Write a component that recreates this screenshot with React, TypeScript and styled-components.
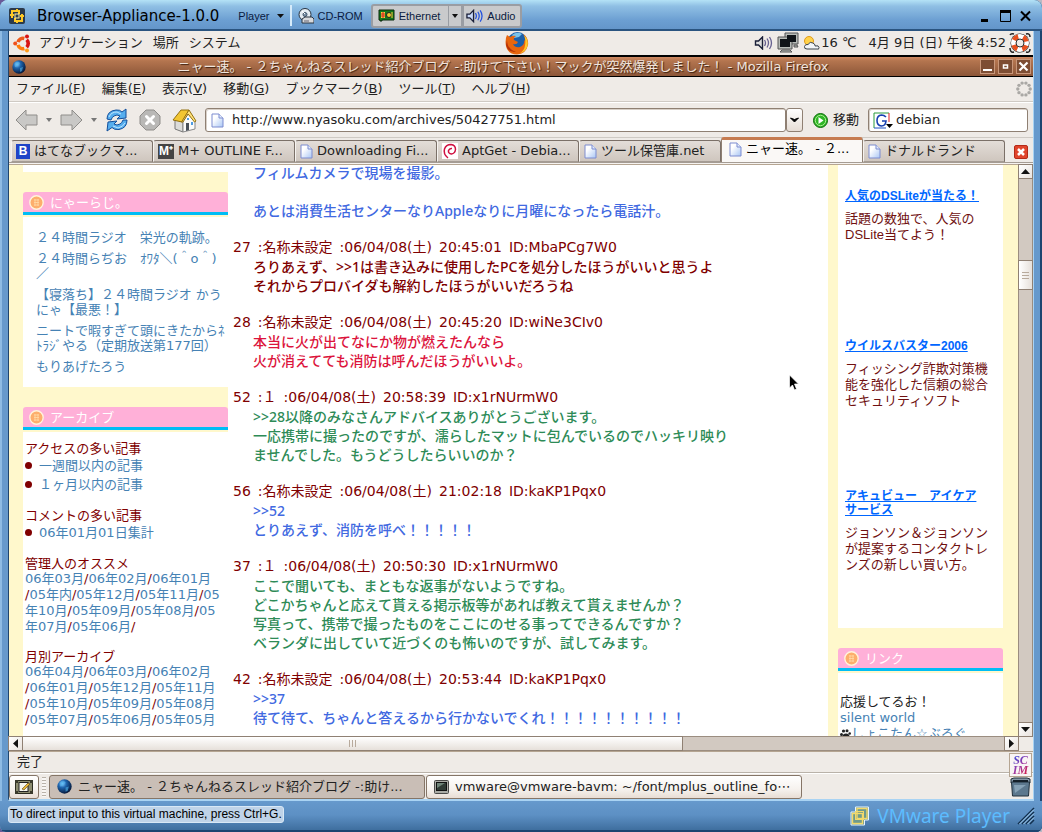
import React from "react";
import styled, { createGlobalStyle, css } from "styled-components";

const UI = `"DejaVu Sans", "Noto Sans CJK JP", sans-serif`;
const WIN = `"Noto Sans", "Noto Sans CJK JP", sans-serif`;
const NARROW = `"Liberation Sans", "Noto Sans CJK JP", sans-serif`;

const Global = createGlobalStyle`
  * { box-sizing: border-box; }
  html, body, #root { height: 100%; }
  body {
    margin: 0;
    overflow: hidden;
    background: linear-gradient(90deg, #6a5a98 0, #6a5a98 50%, #b9b9c4 50%);
    font: 13px/16px ${UI};
    color: #222;
  }
  button, input { font: inherit; color: inherit; }
  button { margin: 0; padding: 0; border: 0; background: none; }
  ul { list-style: none; margin: 0; padding: 0; }
  h2, h3, p { margin: 0; font: inherit; }
  svg { display: block; flex: none; }
  a { color: inherit; text-decoration: none; }
`;

/* ---------- host window ---------- */
const Host = styled.div`
  position: relative;
  height: 100vh;
  min-width: 960px;
  display: flex;
  flex-direction: column;
  background: #6699cc;
  border-radius: 8px 8px 6px 6px;
  overflow: hidden;
  box-shadow: inset 2px 0 0 #8ebbe4, inset -2px 0 0 #1d4570, inset 0 -2px 0 #1d4570;
`;
const HostBar = styled.header`
  flex: none;
  height: 31px;
  display: flex;
  align-items: center;
  padding: 0 11px 0 9px;
  font: 11px/16px ${NARROW};
  color: #0a1a40;
  background: linear-gradient(#b4e2f6 0, #8fbfe4 20%, #6c9fd2 65%, #6496ca 93%, #2a5480 93%);
`;
const HostTitle = styled.h1`
  margin: 0 19px 0 12px;
  font: 15px/20px ${UI};
  color: #000;
`;
const HostMenu = styled.button`
  display: flex;
  align-items: center;
  gap: 7px;
  margin-right: 6px;
`;
const HostRule = styled.span`
  width: 2px;
  height: 21px;
  background: #d6ebfa;
  margin-right: 6px;
`;
const Device = styled.button<{ $raised?: boolean }>`
  display: flex;
  align-items: center;
  gap: 4px;
  height: 24px;
  ${(p) =>
    p.$raised &&
    css`
      padding: 0 6px;
      background: #c9cacc;
      border: 2px solid #9a9da3;
      border-radius: 3px;
    `}
`;
const DeviceGroup = styled.div`
  display: flex;
  margin-left: 8px;
  & > button:nth-child(1) { padding: 0 8px 0 5px; border-radius: 3px 0 0 3px; border-right-width: 1px; }
  & > button:nth-child(2) { padding: 0 3px; border-left: 0; border-right-width: 1px; border-radius: 0; }
  & > button:nth-child(3) { padding: 0 5px 0 2px; border-radius: 0 3px 3px 0; }
`;
const HostControls = styled.div`
  display: flex;
  align-items: center;
  gap: 9px;
  margin-left: auto;
`;
const Guest = styled.div`
  flex: 1;
  min-height: 0;
  margin: 0 8px 0 8px;
  border-left: 1px solid #1f456e;
  border-right: 1px solid #a9d3f3;
  border-bottom: 2px solid #a9d3f3;
  display: flex;
  flex-direction: column;
  background: #efebe7;
`;
const HostFoot = styled.footer`
  flex: none;
  height: 31px;
  display: flex;
  align-items: center;
  padding: 0 7px 1px 8px;
  background: linear-gradient(#6699cc 0, #5d90c4 45%, #3f6f9f 93%, #1d4570 93%);
`;
const Hint = styled.p`
  margin-bottom: 3px;
  height: 17px;
  padding: 0 1px;
  font: 12px/15px ${NARROW};
  color: #000;
  background: #bfd3e8;
  border: 1px solid #d8e8f6;
  border-radius: 3px;
`;
const Brand = styled.div`
  margin-left: auto;
  display: flex;
  align-items: center;
  gap: 7px;
  font: 19px/26px ${WIN};
  color: #5cbcff;
`;

/* ---------- desktop panel ---------- */
const Panel = styled.div`
  flex: none;
  height: 26px;
  display: grid;
  grid-template-columns: 49fr 24px 50fr;
  align-items: center;
  padding: 0 2px 1px 4px;
  border-bottom: 2px solid #000;
`;
const PanelMenus = styled.nav`
  display: flex;
  align-items: center;
  gap: 10px;
  svg { margin-right: -3px; }
`;
const PanelTray = styled.div`
  display: flex;
  align-items: center;
  justify-content: flex-end;
  gap: 4px;
  white-space: nowrap;
`;
const Weather = styled.div`
  display: flex;
  align-items: center;
  gap: 1px;
`;
const Clock = styled.span`
  margin: 0 -1px 0 8px;
`;

/* ---------- browser chrome ---------- */
const TitleBar = styled.div`
  flex: none;
  height: 20px;
  display: flex;
  align-items: center;
  gap: 3px;
  padding: 0 2px 0 3px;
  background: linear-gradient(#d08a63 0, #b4754f 20%, #8c5638 100%);
  border-bottom: 1px solid #000;
  color: #f1e4dc;
  text-shadow: 1px 1px 1px #3c2010;
`;
const TitleText = styled.span`
  flex: 1;
  text-align: center;
  white-space: nowrap;
`;
const WinButton = styled.button`
  width: 15px;
  height: 15px;
  display: grid;
  place-items: center;
  background: #7d4d33;
  border: 1px solid #c9977a;
`;
const MenuBar = styled.nav`
  flex: none;
  height: 25px;
  display: flex;
  align-items: center;
  gap: 16px;
  padding: 0 1px 0 7px;
  border-bottom: 1px solid #cfcac4;
  & > svg { margin-left: auto; }
`;
const ToolBar = styled.div`
  flex: none;
  height: 36px;
  display: flex;
  align-items: center;
  padding: 0 5px 0 6px;
  border-top: 1px solid #fff;
  border-bottom: 1px solid #cfcac4;
`;
const Tool = styled.button<{ $gap: number }>`
  display: flex;
  align-items: center;
  gap: 8px;
  margin-right: ${(p) => p.$gap}px;
`;
const GoTool = styled(Tool)`
  gap: 5px;
`;
const Field = styled.label`
  height: 24px;
  display: flex;
  align-items: center;
  gap: 8px;
  padding: 0 5px;
  background: #fff;
  border: 1px solid #8f8073;
  border-radius: 3px;
  box-shadow: inset 1px 1px 0 #d8d0c8;
  input {
    flex: 1;
    min-width: 0;
    padding: 0;
    border: 0;
    outline: 0;
    background: none;
  }
`;
const UrlField = styled(Field)`
  flex: 1;
  min-width: 0;
`;
const SearchField = styled(Field)`
  width: 160px;
  gap: 2px;
  padding: 0 4px;
`;
const DropButton = styled.button`
  width: 17px;
  height: 24px;
  display: grid;
  place-items: center;
  margin-right: 10px;
  border: 1px solid #8f8073;
  border-radius: 3px;
  background: linear-gradient(#fff, #e6ddd5);
`;
const TabStrip = styled.div`
  flex: none;
  height: 27px;
  display: flex;
  align-items: flex-end;
  padding: 0 5px 2px 2px;
  border-bottom: 1px solid #b5a592;
  background: linear-gradient(#efebe7 0, #efebe7 24px, #a59c94 24px, #a59c94 25px, #f6f3f0 25px);
`;
const Tab = styled.button<{ $active?: boolean }>`
  flex: 1 1 20px;
  min-width: 0;
  height: 22px;
  display: flex;
  align-items: center;
  gap: 4px;
  padding: 0 4px;
  white-space: nowrap;
  overflow: hidden;
  border: 1px solid #7b7068;
  border-bottom-color: #a59c94;
  border-left-color: #f6f3f0;
  border-radius: 3px 3px 0 0;
  background: linear-gradient(#e3ddd8, #cfc6be);
  ${(p) =>
    p.$active &&
    css`
      height: 25px;
      padding: 0 7px 4px;
      color: #000;
      border-color: #8f8073;
      border-top: 3px solid #c67b50;
      border-bottom: 0;
      background: #faf8f6;
    `}
`;
const TabLabel = styled.span``;
const TabClose = styled.button`
  margin: 0 0 3px 9px;
`;

/* ---------- page ---------- */
const Viewport = styled.main`
  flex: 1;
  min-height: 0;
  display: grid;
  grid-template-columns: minmax(0, 1fr) 15px;
  grid-template-rows: minmax(0, 1fr) 15px;
`;
const Page = styled.div`
  overflow: hidden;
  display: flex;
  background: #fff8cc;
  padding: 0 15px 0 14px;
  white-space: nowrap;
`;
const LeftBar = styled.aside`
  flex: none;
  width: 205px;
  display: flex;
  flex-direction: column;
`;
const RightBar = styled(LeftBar)`
  width: 165px;
  margin-left: 10px;
`;
const Sheet = styled.section<{ $pad: string; $grow?: boolean }>`
  background: #fff;
  padding: ${(p) => p.$pad};
  flex: ${(p) => (p.$grow ? "1 0 auto" : "none")};
`;
const BoxTitle = styled.h2`
  flex: none;
  height: 23px;
  margin: 20px 0 2px;
  display: flex;
  align-items: center;
  gap: 6px;
  padding: 2px 6px 0;
  color: #fff;
  background: #ffb0d8;
  border-bottom: 3px solid #00bdf5;
  border-radius: 3px 3px 0 0;
  svg { margin-top: -2px; }
`;
const LinkList = styled.ul`
  display: grid;
  gap: 6px;
  line-height: 15px;
  color: #4682b4;
`;
const Archive = styled.section`
  color: #800000;
  & + & { margin-top: 14px; }
  h3 { line-height: 15px; }
  a { color: #4682b4; }
`;
const Bullets = styled.ul`
  li {
    display: flex;
    align-items: center;
    gap: 7px;
    line-height: 19px;
  }
  li::before {
    content: "";
    width: 7px;
    height: 7px;
    border-radius: 4px;
    background: #800000;
  }
`;
const Thread = styled.div`
  flex: 1;
  min-width: 0;
  overflow: hidden;
  padding-left: 5px;
  background: #fff;
  font-size: 14px;
`;
const Posts = styled.div`
  display: grid;
  gap: 17px;
  margin-top: -2px;
`;
const PostHead = styled.h3`
  line-height: 20px;
  color: #800000;
`;
const PostBody = styled.p<{ $color: string }>`
  padding-left: 20px;
  line-height: 19px;
  font-family: "Noto Sans", "Noto Sans CJK JP", sans-serif;
  font-weight: 500;
  color: ${(p) => p.$color};
`;
const Ads = styled.div`
  display: grid;
  grid-auto-rows: 139px;
  gap: 11px;
  align-content: start;
  font-family: ${NARROW};
  color: #701010;
  a {
    display: block;
    margin-bottom: 8px;
    font-size: 12px;
    line-height: 14px;
    font-weight: bold;
    color: #0066ff;
    text-decoration: underline;
  }
`;
const Blogs = styled.div`
  color: #222;
  a {
    display: flex;
    align-items: center;
    color: #4682b4;
  }
`;

/* ---------- scroll bars ---------- */
const Track = styled.div<{ $across?: boolean }>`
  display: flex;
  flex-direction: ${(p) => (p.$across ? "row" : "column")};
  background: #d2c9c1;
  border: 0 solid #9b8d80;
  border-width: ${(p) => (p.$across ? "1px 0" : "0 1px")};
`;
const ScrollButton = styled.button`
  flex: none;
  width: 15px;
  height: 15px;
  margin: -1px;
  display: grid;
  place-items: center;
  border: 1px solid #8f8073;
  background: linear-gradient(135deg, #fff, #e9e3de);
`;
const Space = styled.div<{ $grow: number }>`
  flex: ${(p) => p.$grow} 1 0;
`;
const Thumb = styled.div<{ $grow?: number; $across?: boolean }>`
  ${(p) => (p.$across ? `flex: ${p.$grow} 1 0; margin: -1px 0;` : "height: 30px; margin: 0 -1px;")}
  display: grid;
  place-items: center;
  border: 1px solid #8f8073;
  background: linear-gradient(${(p) => (p.$across ? "180deg" : "90deg")}, #fff, #e6e0da);
`;

/* ---------- status and task bars ---------- */
const Status = styled.div`
  flex: none;
  height: 22px;
  padding: 2px 8px 0;
  border-top: 1px solid #b5a592;
  border-bottom: 1px solid #b9b2a9;
`;
const TaskBar = styled.div`
  flex: none;
  height: 26px;
  display: flex;
  align-items: center;
  gap: 1px;
  padding: 0 2px 0 0;
  border-top: 1px solid #fff;
  & > svg:last-child { margin-left: auto; }
`;
const Task = styled.button<{ $pressed?: boolean }>`
  flex: 0 1 376px;
  min-width: 0;
  height: 24px;
  display: flex;
  align-items: center;
  gap: 6px;
  padding: 0 7px;
  white-space: nowrap;
  overflow: hidden;
  border: 1px solid #857567;
  border-radius: 3px;
  background: ${(p) => (p.$pressed ? "#c9beb6" : "linear-gradient(#fff, #f6f2ee 60%, #e8ddd4)")};
`;
const ShowDesktop = styled(Task)`
  flex: none;
  width: 30px;
  padding: 0 5px;
`;
const Handle = styled.span`
  width: 4px;
  height: 20px;
  margin: 0 2px 0 2px;
  background: repeating-linear-gradient(#b9b2a9 0, #b9b2a9 1px, #f8f6f4 1px, #f8f6f4 3px);
`;
const Scim = styled.button`
  position: absolute;
  right: 10px;
  bottom: 55px;
  width: 23px;
  height: 24px;
  border: 1px solid #b5a592;
  background: #f8f4f4;
`;
const ScimLabel = styled.span`
  display: block;
  font: italic bold 12px/10px "Liberation Serif", serif;
  background: linear-gradient(135deg, #4a48d0 20%, #9a3aa8 50%, #d02050 85%);
  -webkit-background-clip: text;
  background-clip: text;
  color: transparent;
`;
const Pointer = styled.div`
  position: absolute;
  left: 789px;
  top: 374px;
`;

/* ---------- icons ---------- */
const Caret = ({ s = 7, c = "#111" }: { s?: number; c?: string }) => (
  <svg width={s} height="4" viewBox="0 0 8 4" preserveAspectRatio="none"><path d="M0 0h8L4 4z" fill={c} /></svg>
);
const Arrow = ({ d }: { d: string }) => (
  <svg width="9" height="9" viewBox="0 0 9 9"><path d={d} fill="#111" /></svg>
);
const VmIcon = () => (
  <svg width="16" height="16" viewBox="0 0 16 16">
    <rect width="16" height="16" rx="2" fill="#2b3a4a" />
    <path d="M3 10V3h7v3M13 6v7H6v-3M1 7h4M8 1v3M11 8h4M8 12v3" fill="none" stroke="#ffc926" strokeWidth="2" />
    <rect x="6" y="6" width="4" height="4" fill="none" stroke="#fff0a0" />
  </svg>
);
const CdIcon = () => (
  <svg width="16" height="16" viewBox="0 0 16 16">
    <circle cx="7" cy="6.500" r="6" fill="#e4ecf2" stroke="#26323f" />
    <circle cx="7" cy="6.500" r="2" fill="#7b92a8" stroke="#42566a" />
    <path d="M4 3l3 3" stroke="#fff" />
    <path d="M4 11l3-2h7l2 2v4H4z" fill="#d7d9dc" stroke="#2a3440" />
    <path d="M6 13h5" stroke="#667" />
  </svg>
);
const NicIcon = () => (
  <svg width="17" height="13" viewBox="0 0 17 13">
    <path d="M1 1h15v10H4v1H2v-1H1z" fill="#12781c" stroke="#0b2a0c" />
    <rect x="3" y="3" width="4" height="6" fill="#f7d23a" />
    <path d="M3 5h4M3 7h4M5 3v6" stroke="#c22" />
    <circle cx="11" cy="6" r="2.500" fill="#e8c830" stroke="#222" />
    <path d="M14 3v6" stroke="#f7d23a" />
  </svg>
);
const AudioIcon = ({ c = "#1f4fe0", f = "#c8d8f8", w = 17 }: { c?: string; f?: string; w?: number }) => (
  <svg width={w} height="14" viewBox="0 0 18 14">
    <path d="M1 5h3l4-4v12L4 9H1z" fill={f} stroke="#1a1f38" strokeWidth="1.400" />
    <path d="M10 4q2 3 0 6M12.500 2.500q3 4.500 0 9M15 1q4 6 0 12" fill="none" stroke={c} strokeWidth="1.300" />
  </svg>
);
const UbuntuIcon = () => (
  <svg width="19" height="19" viewBox="0 0 19 19">
    <g fill="none" strokeWidth="3.600">
      <path d="M4.980 8.150A5.200 5.200 0 0 1 11.350 4.480" stroke="#ee5a1c" />
      <path d="M13.680 5.820A5.200 5.200 0 0 1 13.680 13.180" stroke="#d81414" />
      <path d="M11.350 14.520A5.200 5.200 0 0 1 4.980 10.850" stroke="#ff7d0a" />
    </g>
    <circle cx="2.200" cy="9.500" r="2" fill="#f0501a" />
    <circle cx="14" cy="2.600" r="2" fill="#d81414" />
    <circle cx="14" cy="16.400" r="2" fill="#ff9c1a" />
  </svg>
);
const FirefoxIcon = () => (
  <svg width="24" height="24" viewBox="0 0 24 24">
    <circle cx="12.500" cy="11" r="10" fill="#1c5fa8" />
    <path d="M7 4q5-4 10-1l-3 3-5 1z" fill="#79c4ec" />
    <path d="M2 4l3 2q3-2 6-1-3 2-2 4l4 2q-1 3-5 2 2 4 7 3 5-2 4-7 2 2 1 0 0-4-2-6 6 4 5 11-2 9-11 9.500Q2 23 .8 14 0 8 2 4z" fill="#e8660e" />
    <path d="M19 4q5 5 3.500 11-2 6-8 7.500 5-3 5.500-8 1-6-1-10.500z" fill="#ffc928" />
    <path d="M2 9q0 9 9 12-8 1-10-7z" fill="#b83208" />
  </svg>
);
const ScreensIcon = () => (
  <svg width="22" height="22" viewBox="0 0 22 22">
    <g stroke="#555" fill="#b8bcb8">
      <path d="M8 1h13v11H8z" /><path d="M1 5h14v12H1z" />
      <path d="M5 18h8l2 2H3z" /><path d="M17 13h3l1 2h-4z" />
    </g>
    <path d="M10 3h9v7h-9zM3 7h10v8H3z" fill="#101418" />
  </svg>
);
const WeatherIcon = () => (
  <svg width="17" height="14" viewBox="0 0 17 14">
    <circle cx="6" cy="5" r="4.500" fill="#ffd24a" stroke="#e09a18" />
    <path d="M4 13q-3 0-2.500-2.500Q2 8 5 8.500 7 5 10 7t2 3q4-1 4 1.500T14 13z" fill="#f2f5f8" stroke="#3c444c" />
  </svg>
);
const BuoyIcon = () => (
  <svg width="22" height="22" viewBox="0 0 22 22">
    <path d="M1 3q1-2 4-1M17 2q4-1 4 3M21 17q0 4-4 3M5 20q-4 1-4-4" fill="none" stroke="#222" strokeWidth="1.500" />
    <circle cx="11" cy="11" r="9.500" fill="#222" />
    <circle cx="11" cy="11" r="6.500" fill="none" stroke="#fff" strokeWidth="5" />
    <circle cx="11" cy="11" r="6.500" fill="none" stroke="#e8501e" strokeWidth="5" strokeDasharray="5.100 5.110" strokeDashoffset="-2.500" />
    <circle cx="11" cy="11" r="4" fill="#efebe7" stroke="#333" />
  </svg>
);
const GlobeIcon = ({ s = 14 }: { s?: number }) => (
  <svg width={s} height={s} viewBox="0 0 14 14">
    <defs>
      <radialGradient id="globe" cx="35%" cy="30%" r="80%">
        <stop offset="0" stopColor="#8fd0ff" /><stop offset=".35" stopColor="#1e66b0" /><stop offset="1" stopColor="#020a24" />
      </radialGradient>
    </defs>
    <circle cx="7" cy="7" r="6.700" fill="url(#globe)" />
    <path d="M3 3q3-2 5 0L6 6 3 7zM8 8l3-1-1 4-2 1z" fill="#4fb4ee" opacity=".6" />
  </svg>
);
const Throbber = () => (
  <svg width="16" height="16" viewBox="0 0 16 16">
    {Array.from({ length: 10 }, (_, i) => (
      <circle key={i} cx={8 + 6.2 * Math.cos((i * Math.PI) / 5)} cy={8 + 6.2 * Math.sin((i * Math.PI) / 5)} r="1.700" fill="#aaa8a5" />
    ))}
  </svg>
);
const NavArrow = ({ back }: { back?: boolean }) => (
  <svg width="23" height="22" viewBox="0 0 23 22">
    <path
      d={back ? "M11 1v5h11v10H11v5L1 11z" : "M12 1v5H1v10h11v5l10-10z"}
      fill="#c9c8c6" stroke="#8f8d8a" strokeLinejoin="round"
    />
  </svg>
);
const ReloadIcon = () => (
  <svg width="24" height="24" viewBox="0 0 24 24">
    <g fill="#56aeee" stroke="#134f9c" strokeLinejoin="round">
      <path d="M2 11Q2 3 11 2q4-.5 6 2l4-3v9l-9 1 3-3q-3-2-6 0-2 1-3 4z" />
      <path d="M22 12q0 8-8 9.500-5 .5-7-2l-5 3.500 1-9 9-1-3 3q3 2 6 0 2-1 3-4z" />
    </g>
    <path d="M4 9q2-5 8-5l4 2M20 15q-2 4-7 5l-5-2" fill="none" stroke="#bfe4ff" />
  </svg>
);
const StopIcon = () => (
  <svg width="22" height="22" viewBox="0 0 22 22">
    <path d="M7 1h8l6 6v8l-6 6H7l-6-6V7z" fill="#b9b8b6" stroke="#8f8d8a" />
    <path d="M7.500 7.500l7 7M14.500 7.500l-7 7" stroke="#fff" strokeWidth="3" strokeLinecap="round" />
  </svg>
);
const HomeIcon = () => (
  <svg width="25" height="25" viewBox="0 0 25 25">
    <path d="M3 12v9l8 3V12L7 8z" fill="#dcdcda" stroke="#777" />
    <path d="M11 24V13l5-7 7 7v8z" fill="#fbfbfa" stroke="#888" />
    <path d="M1 12L9 2h8l-7 12z" fill="#f2c632" stroke="#927010" strokeLinejoin="round" />
    <path d="M17 2l7 11-1.500 1L16 6l-5 8h-1.500z" fill="#ffe27a" stroke="#927010" strokeLinejoin="round" />
    <path d="M14 15h3v7l-3 1z" fill="#48505a" />
    <path d="M19 14h2v3h-2zM15 10h2v2h-2z" fill="#4f9ce0" />
  </svg>
);
const PageIcon = () => (
  <svg width="13" height="15" viewBox="0 0 13 15">
    <defs>
      <linearGradient id="leaf" x1="0" y1="0" x2="1" y2="1"><stop offset=".3" stopColor="#fff" /><stop offset="1" stopColor="#a9c6f4" /></linearGradient>
    </defs>
    <path d="M1 1h7l4 4v9H1z" fill="url(#leaf)" stroke="#7d8cd0" />
    <path d="M8 1v4h4" fill="#e4ecfb" stroke="#7d8cd0" />
  </svg>
);
const GoIcon = () => (
  <svg width="15" height="15" viewBox="0 0 15 15">
    <circle cx="7.500" cy="7.500" r="7" fill="#2fb526" stroke="#0f6b0c" />
    <circle cx="7.500" cy="7.500" r="5.200" fill="none" stroke="#a8f090" />
    <path d="M5.500 4l5 3.500-5 3.500z" fill="#fff" />
  </svg>
);
const LetterIcon = styled.span<{ $bg: string; $wide?: boolean }>`
  flex: none;
  width: ${(p) => (p.$wide ? 16 : 14)}px;
  height: 15px;
  background: ${(p) => p.$bg};
  color: #fff;
  font: bold 12px/15px "Liberation Sans", sans-serif;
  text-align: center;
`;
const DebianIcon = () => (
  <svg width="16" height="16" viewBox="0 0 16 16">
    <rect width="16" height="16" fill="#fff" />
    <path d="M6 15Q1 11 2.500 6 4 1.500 9 1.500q4.500.5 4.500 5-.5 4-4 4.500-3.500-.5-3-3.500 1-2.500 3.500-2" fill="none" stroke="#d01040" strokeWidth="1.500" />
  </svg>
);
const GoogleIcon = () => (
  <svg width="21" height="17" viewBox="0 0 21 17">
    <path d="M16 1H1v15" fill="none" stroke="#2a9a3a" /><path d="M16 1v9" stroke="#e02020" /><path d="M1 16h12" stroke="#2050c0" />
    <path d="M13 5Q11 3 8.500 3 4 3.500 4 8.500T8.500 14q4 0 4.500-5H9" fill="none" stroke="#1840b0" strokeWidth="1.600" />
    <path d="M13 12h7l-3.500 4z" fill="#000" />
  </svg>
);
const CloseTabIcon = () => (
  <svg width="14" height="14" viewBox="0 0 14 14">
    <rect x=".5" y=".5" width="13" height="13" rx="1.500" fill="#e0452c" stroke="#b42a18" />
    <path d="M4 4l6 6M10 4l-6 6" stroke="#fff" strokeWidth="2.500" />
  </svg>
);
const ButtonIcon = () => (
  <svg width="15" height="15" viewBox="0 0 15 15">
    <circle cx="7.500" cy="7.500" r="6.700" fill="#fdae6c" stroke="#fff3dc" strokeWidth="1.400" />
    <path d="M5 5h5M5 7.500h5M5 10h5M6 4v7M9 4v7" stroke="#ffdca8" strokeWidth=".8" />
  </svg>
);
const PawIcon = () => (
  <svg width="11" height="11" viewBox="0 0 11 11" fill="#222">
    <ellipse cx="6" cy="7.500" rx="3.500" ry="3" /><circle cx="1.500" cy="5.500" r="1.500" /><circle cx="3.500" cy="2" r="1.600" /><circle cx="7" cy="1.800" r="1.500" /><circle cx="9.700" cy="4.500" r="1.300" />
  </svg>
);
const Grip = ({ across }: { across?: boolean }) => (
  <svg width="9" height="9" viewBox="0 0 9 9">
    <path d={across ? "M1.500 1v7M4.500 1v7M7.500 1v7" : "M1 1.500h7M1 4.500h7M1 7.500h7"} stroke="#b8aa9c" />
  </svg>
);
const DesktopIcon = () => (
  <svg width="18" height="14" viewBox="0 0 18 14">
    <rect x=".5" y=".5" width="17" height="13" rx="1" fill="#8c8c70" stroke="#2c2c20" />
    <path d="M0 0h3v3H0zM15 0h3v3h-3zM0 11h3v3H0zM15 11h3v3h-3z" fill="#3a3a2c" />
    <rect x="4" y="2.500" width="9" height="9" fill="#f6f6ee" stroke="#222" />
    <path d="M7 9l6-6 2 1-6 6z" fill="#e8b838" stroke="#5a4010" strokeWidth=".6" />
  </svg>
);
const TermIcon = () => (
  <svg width="15" height="14" viewBox="0 0 15 14">
    <rect x=".5" y=".5" width="14" height="13" rx="1" fill="#a9aaa4" stroke="#4a4a48" />
    <rect x="2.500" y="2.500" width="10" height="8" fill="#2f3a34" stroke="#111" />
    <path d="M3 3h8l-8 5z" fill="#6f8478" />
  </svg>
);
const TrashIcon = () => (
  <svg width="21" height="20" viewBox="0 0 21 20">
    <path d="M1 2l3-1h13l3 1v4H1z" fill="#8496a6" stroke="#20303c" />
    <path d="M1.500 5h18l-1 14H2.500z" fill="#5c788e" stroke="#20303c" />
    <path d="M3 4h15" stroke="#14202a" strokeWidth="2" />
    <path d="M4 8h12l-11 8z" fill="#86a2b6" />
  </svg>
);
const BrandIcon = () => (
  <svg width="20" height="20" viewBox="0 0 20 20">
    <path d="M5.500 1h13v13h-4v5H1V6h4.500z" fill="#6f9a8c" stroke="#e8f4ff" />
    <rect x="7" y="2.500" width="10" height="10" fill="none" stroke="#f3d96c" strokeWidth="1.400" />
    <rect x="2.500" y="7.500" width="10" height="10" fill="none" stroke="#f3d96c" strokeWidth="1.400" />
    <rect x="5.500" y="5.500" width="8" height="8" fill="none" stroke="#f3d96c" />
  </svg>
);
const ResizeIcon = () => (
  <svg width="18" height="18" viewBox="0 0 18 18">
    <path d="M1 17L17 1M5 17L17 5M9 17l8-8M13 17l4-4" stroke="#12304e" strokeWidth="1.500" />
    <path d="M2.500 17L17 2.500M6.500 17L17 6.500M10.500 17l6.500-6.500" stroke="#a9d3f3" />
  </svg>
);

/* ---------- data ---------- */
const menus: [string, string][] = [
  ["ファイル", "F"], ["編集", "E"], ["表示", "V"], ["移動", "G"], ["ブックマーク", "B"], ["ツール", "T"], ["ヘルプ", "H"],
];
const tabs: { icon: React.ReactNode; label: string; active?: boolean }[] = [
  { icon: <LetterIcon $bg="#1f44c8">B</LetterIcon>, label: "はてなブックマ..." },
  { icon: <LetterIcon $bg="#444" $wide>M⁺</LetterIcon>, label: "M+ OUTLINE F..." },
  { icon: <PageIcon />, label: "Downloading Fi..." },
  { icon: <DebianIcon />, label: "AptGet - Debia..." },
  { icon: <PageIcon />, label: "ツール保管庫.net" },
  { icon: <PageIcon />, label: "ニャー速。 - ２...", active: true },
  { icon: <PageIcon />, label: "ドナルドランド" },
];
const ROYAL = "#4169e1", MAROON = "#800000", CRIMSON = "#dc143c", GREEN = "#2e8b57";
const SP = "\u2002";
const posts: { head?: string[]; color: string; lines: string[] }[] = [
  { color: ROYAL, lines: ["フィルムカメラで現場を撮影。", "", "あとは消費生活センターなりAppleなりに月曜になったら電話汁。"] },
  { head: ["27", ":名称未設定", ":06/04/08(土)", "20:45:01", "ID:MbaPCg7W0"], color: MAROON, lines: ["ろりあえず、>>1は書き込みに使用したPCを処分したほうがいいと思うよ", "それからプロバイダも解約したほうがいいだろうね"] },
  { head: ["28", ":名称未設定", ":06/04/08(土)", "20:45:20", "ID:wiNe3CIv0"], color: CRIMSON, lines: ["本当に火が出てなにか物が燃えたんなら", "火が消えてても消防は呼んだほうがいいよ。"] },
  { head: ["52", ":１", ":06/04/08(土)", "20:58:39", "ID:x1rNUrmW0"], color: GREEN, lines: [">>28以降のみなさんアドバイスありがとうございます。", "一応携帯に撮ったのですが、濡らしたマットに包んでいるのでハッキリ映り", "ませんでした。もうどうしたらいいのか？"] },
  { head: ["56", ":名称未設定", ":06/04/08(土)", "21:02:18", "ID:kaKP1Pqx0"], color: ROYAL, lines: [">>52", "とりあえず、消防を呼べ！！！！！"] },
  { head: ["37", ":１", ":06/04/08(土)", "20:50:30", "ID:x1rNUrmW0"], color: GREEN, lines: ["ここで聞いても、まともな返事がないようですね。", "どこかちゃんと応えて貰える掲示板等があれば教えて貰えませんか？", "写真って、携帯で撮ったものをここにのせる事ってできるんですか？", "ベランダに出していて近づくのも怖いのですが、試してみます。"] },
  { head: ["42", ":名称未設定", ":06/04/08(土)", "20:53:44", "ID:kaKP1Pqx0"], color: ROYAL, lines: [">>37", "待て待て、ちゃんと答えるから行かないでくれ！！！！！！！！！！"] },
];
const radio = [
  ["２４時間ラジオ　栄光の軌跡。"],
  ["２４時間らぢお　ｵﾜﾀ＼(＾o＾)", "／"],
  ["【寝落ち】２４時間ラジオ かう", "にゃ【最悪！】"],
  ["ニートで暇すぎて頭にきたからﾈ", "ﾄﾗｼﾞやる（定期放送第177回）"],
  ["もりあげたろう"],
];
const picks = ["06年03月/06年02月/06年01月", "/05年内/05年12月/05年11月/05", "年10月/05年09月/05年08月/05", "年07月/05年06月/"];
const months = ["06年04月/06年03月/06年02月", "/06年01月/05年12月/05年11月", "/05年10月/05年09月/05年08月", "/05年07月/05年06月/05年05月"];
const ads: { title: string[]; text: string[] }[] = [
  { title: ["人気のDSLiteが当たる！"], text: ["話題の数独で、人気の", "DSLite当てよう！"] },
  { title: ["ウイルスバスター2006"], text: ["フィッシング詐欺対策機", "能を強化した信頼の総合", "セキュリティソフト"] },
  { title: ["アキュビュー　アイケア", "サービス"], text: ["ジョンソン＆ジョンソン", "が提案するコンタクトレ", "ンズの新しい買い方。"] },
];

const Lines = ({ of }: { of: string[] }) => (
  <>{of.map((l, i) => <React.Fragment key={i}>{i > 0 && <br />}{l}</React.Fragment>)}</>
);
const Months = ({ of }: { of: string[] }) => (
  <p>
    {of.map((line, i) => (
      <React.Fragment key={i}>
        {i > 0 && <br />}
        {line.split(/(\/)/).map((t, j) => (t === "/" || t === "" ? t : <a key={j} href="#month">{t}</a>))}
      </React.Fragment>
    ))}
  </p>
);

export default function App() {
  return (
    <>
      <Global />
      <Host>
        <HostBar>
          <VmIcon />
          <HostTitle>Browser-Appliance-1.0.0</HostTitle>
          <HostMenu>Player <Caret s={7} /></HostMenu>
          <HostRule />
          <Device><CdIcon />CD-ROM</Device>
          <DeviceGroup>
            <Device $raised><NicIcon />Ethernet</Device>
            <Device $raised aria-label="Ethernet options"><Caret s={6} /></Device>
            <Device $raised><AudioIcon />Audio</Device>
          </DeviceGroup>
          <HostControls>
            <button aria-label="Minimize"><svg width="11" height="12"><path d="M1 10.500h7" stroke="#000" strokeWidth="3" /></svg></button>
            <button aria-label="Maximize"><svg width="11" height="12"><path d="M0 1.500h11" stroke="#000" strokeWidth="3" /><path d="M.5 1v10.500h10V1" fill="none" stroke="#000" /></svg></button>
            <button aria-label="Close"><svg width="11" height="12"><path d="M1 1.500l9 9M10 1.500l-9 9" stroke="#000" strokeWidth="2" /></svg></button>
          </HostControls>
        </HostBar>

        <Guest>
          <Panel>
            <PanelMenus>
              <UbuntuIcon />
              <button>アプリケーション</button>
              <button>場所</button>
              <button>システム</button>
            </PanelMenus>
            <FirefoxIcon />
            <PanelTray>
              <AudioIcon c="#666090" f="#ddd" w={19} />
              <ScreensIcon />
              <Weather><WeatherIcon />16 ℃</Weather>
              <Clock>4月 9日 (日) 午後 4:52</Clock>
              <BuoyIcon />
            </PanelTray>
          </Panel>

          <TitleBar>
            <GlobeIcon />
            <TitleText>ニャー速。 - ２ちゃんねるスレッド紹介ブログ -:助けて下さい！マックが突然爆発しました！ - Mozilla Firefox</TitleText>
            <WinButton aria-label="最小化"><svg width="11" height="11"><path d="M1 9h9" stroke="#fff" strokeWidth="2" /></svg></WinButton>
            <WinButton aria-label="最大化"><svg width="11" height="11"><path d="M3.500 4h4v3h-4z" fill="none" stroke="#fff" strokeWidth="1.500" /></svg></WinButton>
            <WinButton aria-label="閉じる"><svg width="11" height="11"><path d="M1.500 1.500l8 8M9.500 1.500l-8 8" stroke="#fff" strokeWidth="2.200" /></svg></WinButton>
          </TitleBar>

          <MenuBar>
            {menus.map(([t, k]) => <button key={k}>{t}(<u>{k}</u>)</button>)}
            <Throbber />
          </MenuBar>

          <ToolBar>
            <Tool $gap={8} aria-label="戻る"><NavArrow back /><Caret s={6} c="#777" /></Tool>
            <Tool $gap={8} aria-label="進む"><NavArrow /><Caret s={6} c="#777" /></Tool>
            <Tool $gap={10} aria-label="更新"><ReloadIcon /></Tool>
            <Tool $gap={11} aria-label="中止"><StopIcon /></Tool>
            <Tool $gap={8} aria-label="ホーム"><HomeIcon /></Tool>
            <UrlField><PageIcon /><input aria-label="URL" defaultValue="http://www.nyasoku.com/archives/50427751.html" /></UrlField>
            <DropButton aria-label="履歴"><svg width="9" height="6"><path d="M.5 1l4 4 4-4-4 1.500z" fill="#000" stroke="#000" /></svg></DropButton>
            <GoTool $gap={9}><GoIcon />移動</GoTool>
            <SearchField><GoogleIcon /><input aria-label="検索" defaultValue="debian" /></SearchField>
          </ToolBar>

          <TabStrip role="tablist">
            {tabs.map((t) => (
              <Tab key={t.label} role="tab" aria-selected={!!t.active} $active={t.active}>
                {t.icon}<TabLabel>{t.label}</TabLabel>
              </Tab>
            ))}
            <TabClose aria-label="タブを閉じる"><CloseTabIcon /></TabClose>
          </TabStrip>

          <Viewport>
            <Page>
              <LeftBar>
                <Sheet $pad="7px 0 0" />
                <BoxTitle><ButtonIcon />にゃーらじ。</BoxTitle>
                <Sheet $pad="13px 0 13px 13px">
                  <LinkList>
                    {radio.map((r) => <li key={r[0]}><a href="#radio"><Lines of={r} /></a></li>)}
                  </LinkList>
                </Sheet>
                <BoxTitle><ButtonIcon />アーカイブ</BoxTitle>
                <Sheet $pad="9px 0 0 2px" $grow>
                  <Archive>
                    <h3>アクセスの多い記事</h3>
                    <Bullets>
                      <li><a href="#week">一週間以内の記事</a></li>
                      <li><a href="#one">１ヶ月以内の記事</a></li>
                    </Bullets>
                  </Archive>
                  <Archive>
                    <h3>コメントの多い記事</h3>
                    <Bullets><li><a href="#total">06年01月01日集計</a></li></Bullets>
                  </Archive>
                  <Archive><h3>管理人のオススメ</h3><Months of={picks} /></Archive>
                  <Archive><h3>月別アーカイブ</h3><Months of={months} /></Archive>
                </Sheet>
              </LeftBar>

              <Thread>
                <Posts>
                  {posts.map((p, i) => (
                    <article key={i}>
                      {p.head && <PostHead>{p.head.join(SP)}</PostHead>}
                      <PostBody $color={p.color}><Lines of={p.lines} /></PostBody>
                    </article>
                  ))}
                </Posts>
              </Thread>

              <RightBar>
                <Sheet $pad="24px 0 0 7px">
                  <Ads>
                    {ads.map((a) => (
                      <div key={a.title[0]}>
                        <a href="#ad"><Lines of={a.title} /></a>
                        <p><Lines of={a.text} /></p>
                      </div>
                    ))}
                  </Ads>
                </Sheet>
                <BoxTitle><ButtonIcon />リンク</BoxTitle>
                <Sheet $pad="21px 0 0 2px" $grow>
                  <Blogs>
                    <p>応援してるお！</p>
                    <a href="#silent">silent world</a>
                    <a href="#shoko"><PawIcon />しょこたん☆ぶろぐ</a>
                  </Blogs>
                </Sheet>
              </RightBar>
            </Page>

            <Track>
              <ScrollButton aria-label="上へ"><Arrow d="M4.500 2L9 7H0z" /></ScrollButton>
              <Space $grow={82} />
              <Thumb><Grip /></Thumb>
              <Space $grow={430} />
              <ScrollButton aria-label="下へ"><Arrow d="M4.500 7L9 2H0z" /></ScrollButton>
            </Track>
            <Track $across>
              <ScrollButton aria-label="左へ"><Arrow d="M2 4.500L7 0v9z" /></ScrollButton>
              <Thumb $across $grow={658}><Grip across /></Thumb>
              <Space $grow={322} />
              <ScrollButton aria-label="右へ"><Arrow d="M7 4.500L2 0v9z" /></ScrollButton>
            </Track>
          </Viewport>

          <Status>完了</Status>
          <TaskBar>
            <ShowDesktop aria-label="デスクトップの表示"><DesktopIcon /></ShowDesktop>
            <Handle />
            <Task $pressed><GlobeIcon s={15} />ニャー速。 - ２ちゃんねるスレッド紹介ブログ -:助け...</Task>
            <Task><TermIcon />vmware@vmware-bavm: ~/font/mplus_outline_fo⋯</Task>
            <TrashIcon />
          </TaskBar>
        </Guest>

        <HostFoot>
          <Hint>To direct input to this virtual machine, press Ctrl+G.</Hint>
          <Brand><BrandIcon />VMware Player<ResizeIcon /></Brand>
        </HostFoot>
        <Scim><ScimLabel>SC<br />IM</ScimLabel></Scim>
        <Pointer>
          <svg width="11" height="17" viewBox="0 0 11 17"><path d="M.5 1v13l3-3 2 5 2-1-2-5h4z" fill="#000" stroke="#fff" strokeWidth=".7" /></svg>
        </Pointer>
      </Host>
    </>
  );
}
